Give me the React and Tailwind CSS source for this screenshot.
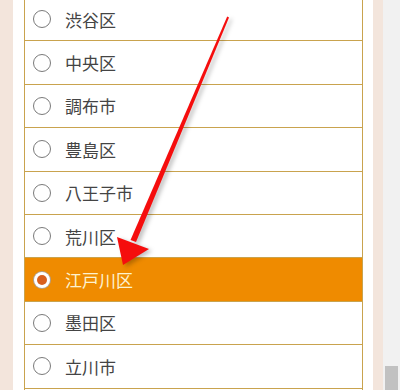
import React from "react";

const wards = ["渋谷区", "中央区", "調布市", "豊島区", "八王子市", "荒川区", "江戸川区", "墨田区", "立川市"];
const selected = "江戸川区";

function Radio({ checked }) {
  if (checked) {
    return (
      <span className="flex h-[16px] w-[16px] shrink-0 items-center justify-center rounded-full bg-white ring-1 ring-[#b0a090]">
        <span className="h-[10px] w-[10px] rounded-full bg-[#d8601e]" />
      </span>
    );
  }
  return <span className="h-[18px] w-[18px] shrink-0 rounded-full border border-[#7a7a7a] bg-white" />;
}

function Arrow() {
  return (
    <svg
      className="pointer-events-none absolute left-0 top-0"
      width="400"
      height="390"
      viewBox="0 0 400 390"
      style={{ filter: "drop-shadow(3px 2px 2px rgba(0,0,0,0.25))" }}
    >
      <polygon points="227.2,16.6 229,17.4 136,242 130.5,240" fill="#f50d0d" />
      <polygon points="123,265 117,237 149,249" fill="#f50d0d" />
    </svg>
  );
}

export default function App() {
  return (
    <div className="relative flex h-[390px] w-[400px] overflow-hidden bg-white" style={{ fontFamily: '"Noto Sans CJK JP", "Noto Sans", sans-serif' }}>
      <div className="w-[13px] bg-[#f3e5dc]" />
      <div className="w-[11px] bg-white" />
      <div className="w-[339px] border-x border-[#c9a34e]">
        <ul className="-mt-[2px]">
          {wards.map((w) => {
            const on = w === selected;
            return (
              <li
                key={w}
                className={`flex h-[43.4px] items-center border-b border-[#c9a34e] pl-[8px] ${on ? "bg-[#ef8b00]" : "bg-white"}`}
              >
                <span className="flex w-[18px] justify-center">
                  <Radio checked={on} />
                </span>
                <span className={`ml-[14px] text-[17px] font-normal leading-none ${on ? "text-[#fdf2cf]" : "text-[#444444]"}`}>{w}</span>
              </li>
            );
          })}
        </ul>
      </div>
      <div className="w-[10px] bg-white" />
      <div className="w-[10px] bg-[#f3e5dc]" />
      <div className="relative w-[17px] bg-[#f1f1f1]">
        <div className="absolute left-[2px] top-[366px] h-[30px] w-[13px] bg-[#c1c1c1]" />
      </div>
      <Arrow />
    </div>
  );
}
